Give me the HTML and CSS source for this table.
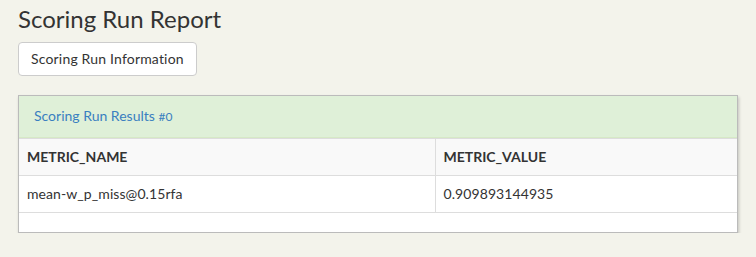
FILE: index.html
```html
<!DOCTYPE html>
<html lang="en">
<head>
  <meta charset="UTF-8">
  <title>Scoring Run Report</title>
  <link rel="stylesheet" href="styles.css">
</head>
<body>
  <div class="page">
    <h1 class="page-title">Scoring Run Report</h1>
    <button class="btn">Scoring Run Information</button>

    <div class="panel">
      <div class="panel-heading">Scoring Run Results <small>#0</small></div>
      <table class="results">
        <thead>
          <tr>
            <th>METRIC_NAME</th>
            <th>METRIC_VALUE</th>
          </tr>
        </thead>
        <tbody>
          <tr>
            <td>mean-w_p_miss@0.15rfa</td>
            <td>0.909893144935</td>
          </tr>
        </tbody>
      </table>
    </div>
  </div>
</body>
</html>
```

FILE: styles.css
```css
* { box-sizing: border-box; }
body {
  margin: 0;
  background: #f3f3eb;
  font-family: Lato, "Open Sans", sans-serif;
  font-size: 14px;
  line-height: 20px;
  color: #333;
}

.page {
  padding: 6px 18px 0;
}

.page-title {
  margin: 0 0 10px;
  font-size: 24px;
  font-weight: normal;
  line-height: 26px;
  color: #333;
}

.btn {
  font-family: inherit;
  font-size: 14px;
  line-height: 20px;
  letter-spacing: 0.18px;
  color: #333;
  background: #fff;
  border: 1px solid #ccc;
  border-radius: 4px;
  padding: 6px 12px;
}

.panel {
  margin-top: 19px;
  background: #fff;
  border: 1px solid #bbb;
  box-shadow: 1px 2px 3px rgba(0,0,0,0.2);
  padding-bottom: 19px;
}

.panel-heading {
  background: #dff0d8;
  border-bottom: 1px solid #d6e9c6;
  padding: 10px 15px;
  color: #3a7fc0;
}

.panel-heading small {
  font-size: 12px;
}

.results {
  width: 100%;
  border-collapse: collapse;
}

.results th,
.results td {
  text-align: left;
  padding: 8px;
  border: 1px solid #ddd;
}

.results tr > :first-child { border-left: 0; }
.results tr > :last-child { border-right: 0; }

.results th {
  background: #f9f9f9;
  font-weight: bold;
}

.results td {
  letter-spacing: 0.08px;
}

.results th:first-child,
.results td:first-child {
  width: 416px;
}
```
